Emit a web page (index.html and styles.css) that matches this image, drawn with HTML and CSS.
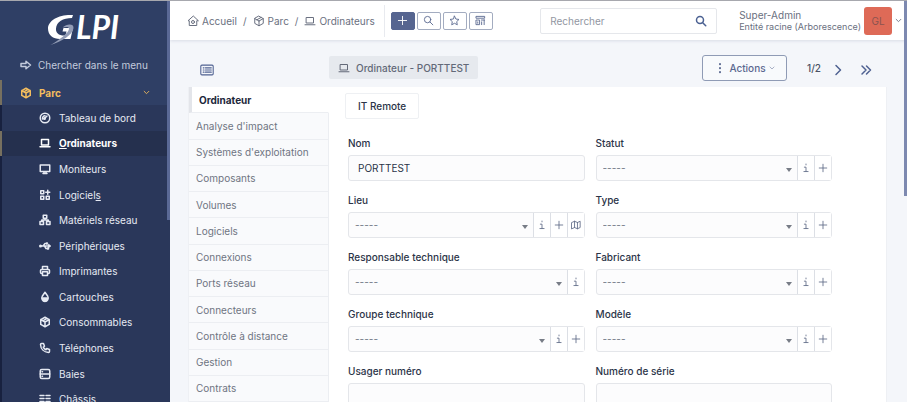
FILE: index.html
```html
<!DOCTYPE html>
<html lang="fr">
<head>
<meta charset="utf-8">
<title>Ordinateur - PORTTEST - GLPI</title>
<link rel="stylesheet" href="styles.css">
</head>
<body>
<svg class="sprite" aria-hidden="true">
  <symbol id="i-arrow" viewBox="0 0 24 24"><path d="M2 9h10V4.500l9 7.500l-9 7.500V15H2z"/></symbol>
  <symbol id="i-box" viewBox="0 0 24 24"><path d="M12 2.500l8.500 4.700v9.600L12 21.500l-8.500-4.700V7.200zM12 12l8.500-4.800M12 12v9.500M12 12L3.500 7.200M16.200 4.900L7.700 9.600"/></symbol>
  <symbol id="i-gauge" viewBox="0 0 24 24"><circle cx="12" cy="12" r="9.500"/><path d="M10.500 13.500L16 8M7 14c-.5-4 2-6.500 5-6.500"/><circle cx="11" cy="13" r="1.500"/></symbol>
  <symbol id="i-laptop" viewBox="0 0 24 24"><path d="M2 19.500h20M5 5h14v11H5z"/></symbol>
  <symbol id="i-monitor" viewBox="0 0 24 24"><path d="M2.500 4h19v13h-19zM8 21h8M10 17v4M14 17v4"/></symbol>
  <symbol id="i-apps" viewBox="0 0 24 24"><path d="M3.500 3.500h6v6h-6zM3.500 14.500h6v6h-6zM14.500 14.500h6v6h-6zM13.500 6.500h8M17.500 2.500v8"/></symbol>
  <symbol id="i-network" viewBox="0 0 24 24"><path d="M8.500 2.500h7v6h-7zM2 15h7v6H2zM15 15h7v6h-7zM12 8.500V12M5.500 15v-3h13v3"/></symbol>
  <symbol id="i-usb" viewBox="0 0 24 24"><path d="M4 12h15M8 12l4-5h3M11 12l3 5h3"/><circle cx="3" cy="12" r="1.500"/><circle cx="16" cy="7" r="1"/><path d="M17 16h2v2h-2zM19.500 9.500l3 2.500l-3 2.500z"/></symbol>
  <symbol id="i-printer" viewBox="0 0 24 24"><path d="M7 17H5a2 2 0 0 1-2-2v-4a2 2 0 0 1 2-2h14a2 2 0 0 1 2 2v4a2 2 0 0 1-2 2h-2M17 9V3H7v6M7 13.500h10V21H7z"/></symbol>
  <symbol id="i-drop" viewBox="0 0 24 24"><path d="M12 2.500l5.500 8c2.500 4.500-.5 10.500-5.500 10.500S4 15 6.500 10.500z"/><path fill="currentColor" d="M7 14h10c0 7-10 7-10 0z"/></symbol>
  <symbol id="i-phone" viewBox="0 0 24 24"><path d="M5 3h4l2 5.500l-2.500 1.700a11 11 0 0 0 5.300 5.300L15.500 13l5.500 2v4a2 2 0 0 1-2 2C10 20.500 3.500 14 3 5a2 2 0 0 1 2-2z"/></symbol>
  <symbol id="i-rack" viewBox="0 0 24 24"><rect x="2.500" y="3" width="19" height="18" rx="3"/><path d="M2.500 12h19M6 7.500h1M6 16.500h1"/></symbol>
  <symbol id="i-chassis" viewBox="0 0 24 24"><path d="M2 5h8M2 11h8M2 17h8M14 5h8M14 11h8M14 17h8"/></symbol>
  <symbol id="i-home" viewBox="0 0 24 24"><path d="M12 2.500L2 11.500h2.500V21h15v-9.500H22z"/><circle cx="12" cy="14" r="3"/></symbol>
  <symbol id="i-search" viewBox="0 0 24 24"><circle cx="10" cy="10" r="7"/><path d="M15 15l6.500 6.500"/></symbol>
  <symbol id="i-star" viewBox="0 0 24 24"><path d="M12 2.500l3 6.300l6.800.9l-5 4.800l1.300 6.900L12 18l-6.100 3.400l1.300-6.900l-5-4.800l6.800-.9z"/></symbol>
  <symbol id="i-template" viewBox="0 0 24 24"><path d="M3 3h18v4H3zM3 11h7v10H3zM6 15v3M14 11h7M14.500 15v6M20 11v10"/></symbol>
  <symbol id="i-plus" viewBox="0 0 24 24"><path d="M12 3v18M3 12h18"/></symbol>
  <symbol id="i-list" viewBox="0 0 26 22"><rect x="1.500" y="2" width="23" height="18" rx="2"/><path d="M6 7h1.500M6 11h1.500M6 15h1.500M10 7h11M10 11h11M10 15h11"/></symbol>
  <symbol id="i-down" viewBox="0 0 24 24"><path d="M4 8l8 8l8-8"/></symbol>
  <symbol id="i-next" viewBox="0 0 24 24"><path d="M8 3l9 9l-9 9"/></symbol>
  <symbol id="i-last" viewBox="0 0 24 24"><path d="M4 4l8 8l-8 8M13 4l8 8l-8 8"/></symbol>
  <symbol id="i-dots" viewBox="0 0 24 24"><path stroke-width="4" d="M12 4v.5M12 12v.5M12 20v.5"/></symbol>
  <symbol id="i-info" viewBox="0 0 24 24"><path d="M12 2.500v2M8 10h4v10M7 20.500h10"/></symbol>
  <symbol id="i-map" viewBox="0 0 24 24"><path d="M2 6l6.500-3l7 3L22 3v15l-6.500 3l-7-3L2 21zM8.500 3v15M15.500 6v15"/></symbol>
</svg>

<div class="app">
  <aside class="sidebar">
    <a class="logo" href="#" aria-label="GLPI">
      <svg viewBox="0 -10 84 44">
        <path d="M25 1C12 0 0 6 0 14.500c0 6.500 5 10.500 12 10.500h10.500L25 14h-9.500l-1 3.500h4l-1 4C11 22 7.500 19 8 14.500C8.500 8 15 4 24 4z" fill="#fff"/>
        <path d="M14.500 13.500C19 9.500 26 9.500 25.500 14C25 20.500 14 27.500 2.500 31C12 25.500 20.500 19 21 15c.3-2.500-3-2.500-6.500-1.500z" fill="#929cb5"/>
        <text x="28" y="25">LPI</text>
      </svg>
    </a>
    <a class="find" href="#"><svg class="icon"><use href="#i-arrow"/></svg>Chercher dans le menu</a>
    <a class="section" href="#"><svg class="icon"><use href="#i-box"/></svg><span>Parc</span><svg class="icon chev"><use href="#i-down"/></svg></a>
    <nav class="menu">
      <a href="#"><svg class="icon"><use href="#i-gauge"/></svg>Tableau de bord</a>
      <a class="active" href="#"><svg class="icon"><use href="#i-laptop"/></svg><span><u>O</u>rdinateurs</span></a>
      <a href="#"><svg class="icon"><use href="#i-monitor"/></svg>Moniteurs</a>
      <a href="#"><svg class="icon"><use href="#i-apps"/></svg><span>Logiciel<u>s</u></span></a>
      <a href="#"><svg class="icon"><use href="#i-network"/></svg>Matériels réseau</a>
      <a href="#"><svg class="icon"><use href="#i-usb"/></svg>Périphériques</a>
      <a href="#"><svg class="icon"><use href="#i-printer"/></svg>Imprimantes</a>
      <a href="#"><svg class="icon"><use href="#i-drop"/></svg>Cartouches</a>
      <a href="#"><svg class="icon"><use href="#i-box"/></svg>Consommables</a>
      <a href="#"><svg class="icon"><use href="#i-phone"/></svg>Téléphones</a>
      <a href="#"><svg class="icon"><use href="#i-rack"/></svg>Baies</a>
      <a href="#"><svg class="icon"><use href="#i-chassis"/></svg>Châssis</a>
    </nav>
  </aside>

  <div class="page">
    <header class="topbar">
      <nav class="crumbs">
        <a href="#"><svg class="icon"><use href="#i-home"/></svg>Accueil</a><span>/</span>
        <a href="#"><svg class="icon"><use href="#i-box"/></svg>Parc</a><span>/</span>
        <a href="#"><svg class="icon"><use href="#i-laptop"/></svg>Ordinateurs</a>
      </nav>
      <div class="tools">
        <button class="primary" aria-label="Ajouter"><svg class="icon"><use href="#i-plus"/></svg></button>
        <button aria-label="Rechercher"><svg class="icon"><use href="#i-search"/></svg></button>
        <button aria-label="Favoris"><svg class="icon"><use href="#i-star"/></svg></button>
        <button aria-label="Gabarits"><svg class="icon"><use href="#i-template"/></svg></button>
      </div>
      <form class="search">
        <input type="text" placeholder="Rechercher" aria-label="Rechercher">
        <button type="button" aria-label="Lancer la recherche"><svg class="icon"><use href="#i-search"/></svg></button>
      </form>
      <a class="user" href="#">
        <span class="who"><span class="role">Super-Admin</span><span>Entité racine (Arborescence)</span></span>
        <span class="avatar">GL</span>
        <svg class="icon chev"><use href="#i-down"/></svg>
      </a>
    </header>

    <main class="content">
      <div class="toolbar">
        <button class="plain list" aria-label="Liste"><svg class="icon"><use href="#i-list"/></svg></button>
        <h1 class="title"><svg class="icon"><use href="#i-laptop"/></svg>Ordinateur - PORTTEST</h1>
        <button class="actions"><svg class="icon"><use href="#i-dots"/></svg>Actions<svg class="icon chev"><use href="#i-down"/></svg></button>
        <span class="count">1/2</span>
        <button class="plain next" aria-label="Suivant"><svg class="icon"><use href="#i-next"/></svg></button>
        <button class="plain last" aria-label="Dernier"><svg class="icon"><use href="#i-last"/></svg></button>
      </div>
      <div class="panel">
        <nav class="tabs">
          <a class="current" href="#">Ordinateur</a>
          <a href="#">Analyse d'impact</a>
          <a href="#">Systèmes d'exploitation</a>
          <a href="#">Composants</a>
          <a href="#">Volumes</a>
          <a href="#">Logiciels</a>
          <a href="#">Connexions</a>
          <a href="#">Ports réseau</a>
          <a href="#">Connecteurs</a>
          <a href="#">Contrôle à distance</a>
          <a href="#">Gestion</a>
          <a href="#">Contrats</a>
        </nav>
        <form class="form">
          <button type="button" class="remote">IT Remote</button>
          <div class="fields">
            <div class="field"><label for="nom">Nom</label>
              <div class="group"><input id="nom" type="text" value="PORTTEST"></div></div>
            <div class="field"><label for="statut">Statut</label>
              <div class="group"><div class="pick"><select id="statut"><option>-----</option></select></div><button type="button" aria-label="Info"><svg class="icon"><use href="#i-info"/></svg></button><button type="button" aria-label="Ajouter"><svg class="icon"><use href="#i-plus"/></svg></button></div></div>
            <div class="field"><label for="lieu">Lieu</label>
              <div class="group"><div class="pick"><select id="lieu"><option>-----</option></select></div><button type="button" aria-label="Info"><svg class="icon"><use href="#i-info"/></svg></button><button type="button" aria-label="Ajouter"><svg class="icon"><use href="#i-plus"/></svg></button><button type="button" aria-label="Carte"><svg class="icon"><use href="#i-map"/></svg></button></div></div>
            <div class="field"><label for="type">Type</label>
              <div class="group"><div class="pick"><select id="type"><option>-----</option></select></div><button type="button" aria-label="Info"><svg class="icon"><use href="#i-info"/></svg></button><button type="button" aria-label="Ajouter"><svg class="icon"><use href="#i-plus"/></svg></button></div></div>
            <div class="field"><label for="resp">Responsable technique</label>
              <div class="group"><div class="pick"><select id="resp"><option>-----</option></select></div><button type="button" aria-label="Info"><svg class="icon"><use href="#i-info"/></svg></button></div></div>
            <div class="field"><label for="fab">Fabricant</label>
              <div class="group"><div class="pick"><select id="fab"><option>-----</option></select></div><button type="button" aria-label="Info"><svg class="icon"><use href="#i-info"/></svg></button><button type="button" aria-label="Ajouter"><svg class="icon"><use href="#i-plus"/></svg></button></div></div>
            <div class="field"><label for="groupe">Groupe technique</label>
              <div class="group"><div class="pick"><select id="groupe"><option>-----</option></select></div><button type="button" aria-label="Info"><svg class="icon"><use href="#i-info"/></svg></button><button type="button" aria-label="Ajouter"><svg class="icon"><use href="#i-plus"/></svg></button></div></div>
            <div class="field"><label for="modele">Modèle</label>
              <div class="group"><div class="pick"><select id="modele"><option>-----</option></select></div><button type="button" aria-label="Info"><svg class="icon"><use href="#i-info"/></svg></button><button type="button" aria-label="Ajouter"><svg class="icon"><use href="#i-plus"/></svg></button></div></div>
            <div class="field"><label for="usager">Usager numéro</label>
              <div class="group"><input id="usager" type="text"></div></div>
            <div class="field"><label for="serie">Numéro de série</label>
              <div class="group"><input id="serie" type="text"></div></div>
          </div>
        </form>
      </div>
    </main>
  </div>
</div>
</body>
</html>
```
FILE: styles.css
```css
* { box-sizing: border-box; }
body {
  margin: 0;
  font: 10px/16px Inter, "Liberation Sans", sans-serif;
  color: #2b3448;
  background: #f4f6fa;
}
a { color: inherit; text-decoration: none; }
button, input, select { font: inherit; color: inherit; margin: 0; }
button { display: inline-flex; align-items: center; justify-content: center; padding: 0; background: #fff; }
.sprite { position: absolute; width: 0; height: 0; }
.icon {
  width: 12px;
  height: 12px;
  flex: none;
  fill: none;
  stroke: currentColor;
  stroke-width: 2;
  stroke-linejoin: round;
  stroke-linecap: round;
}
.icon.chev { width: 7px; height: 7px; stroke-width: 3; }

.app {
  position: relative;
  display: flex;
  height: 100vh;
  overflow: hidden;
  border-top: 1px solid #a7a8ae;
}
.app::after {
  content: "";
  position: absolute;
  top: 0;
  right: 0;
  width: 3px;
  height: 195px;
  background: #7d89b0;
}

/* Sidebar */
.sidebar {
  position: relative;
  flex: 0 0 170px;
  display: flex;
  flex-direction: column;
  overflow: hidden;
  color: #e6eaf3;
  background: #2f3f65;
}
.sidebar::after {
  content: "";
  position: absolute;
  top: 0;
  right: 0;
  width: 3px;
  height: 219px;
  background: #5a6996;
}
.sidebar .icon { stroke-width: 3; }
.logo { flex: none; height: 51px; padding: 3px 0 0 48px; }
.logo svg { display: block; width: 84px; height: 44px; }
.logo text { font: italic 700 32px Lato, sans-serif; fill: #fff; }
.find, .section { flex: none; display: flex; align-items: center; gap: 6px; padding-left: 20px; }
.find { height: 25px; margin-bottom: 3px; color: #c3cbdd; }
.section { height: 25px; padding-left: 18px; padding-right: 20px; gap: 7px; border-left: 2px solid #77705f; color: #f3bd5e; font-weight: 700; }
.section span { flex: 1; }
.menu {
  flex: none;
  height: 307px;
  display: grid;
  grid-template-rows: repeat(12, 1fr);
  background: #2a375a;
}
.menu a { display: flex; align-items: center; gap: 8px; padding-left: 37px; border-left: 2px solid #18213f; }
.menu .active { background: #25304e; border-left-color: #77705f; color: #fff; font-weight: 700; }

/* Top bar */
.page { flex: 1; min-width: 0; display: flex; flex-direction: column; }
.topbar {
  flex: 0 0 39px;
  display: flex;
  align-items: center;
  padding-right: 5px;
  background: #fff;
  box-shadow: 0 1px 3px #d8dce6;
  color: #6a7080;
}
.crumbs { display: flex; align-items: center; gap: 6px; padding-left: 17px; }
.crumbs a { display: flex; align-items: center; gap: 3px; }
.tools { display: flex; gap: 2px; margin-left: 9px; padding: 7px 0 7px 6px; border-left: 1px solid #e8eaef; }
.tools button { width: 24px; height: 18px; border: 1px solid #a3acc0; border-radius: 2px; color: #5c6a91; }
.tools .primary { background: #566590; border-color: #566590; color: #fff; }
.tools .icon { width: 11px; height: 11px; }
.search { flex: 0 1 177px; min-width: 0; display: flex; height: 26px; margin-left: auto; border: 1px solid #e5e7eb; border-radius: 2px; }
.search input { flex: 1; min-width: 0; border: 0; padding: 0 9px; background: none; }
.search input::placeholder { color: #9297a2; }
.search button { width: 30px; border: 0; color: #4b6192; background: none; }
.search .icon { stroke-width: 3; }
.user { display: flex; align-items: center; gap: 3px; margin-left: 22px; }
.who { display: flex; flex-direction: column; font-size: 9px; line-height: 12px; white-space: nowrap; }
.role { font-size: 10px; }
.avatar { width: 28px; height: 28px; border-radius: 3px; background: #de6a57; color: #8b5350; text-align: center; line-height: 28px; }

/* Record toolbar */
.content { flex: 1; min-height: 0; display: flex; flex-direction: column; padding: 0 20px 0 18px; }
.toolbar { flex: 0 0 47px; display: flex; align-items: center; padding: 8px 15px 0 12px; color: #5a6890; }
.plain { padding-top: 4px; border: 0; background: none; color: #4f6191; }
.plain .icon { stroke-width: 3; }
.list .icon { width: 14px; height: 12px; stroke-width: 2; }
.title { display: flex; align-items: center; gap: 6px; height: 23px; margin: 0 0 0 115px; padding: 0 9px; border-radius: 2px; background: #e6e9ee; color: #636978; font-size: 10px; font-weight: 500; }
.actions { width: 85px; height: 26px; margin-left: auto; border: 1px solid #8f9bb5; border-radius: 3px; background: #f8fafc; font-weight: 500; gap: 3px; }
.actions .chev { width: 6px; height: 6px; stroke-width: 2; }
.count { margin-left: 20px; color: #4a5163; font-weight: 500; }
.next { margin-left: 11px; }
.last { margin-left: 16px; }

/* Record */
.panel { flex: 1; min-height: 0; display: flex; background: #fff; border: 1px solid #eef0f4; border-width: 0 1px; }
.tabs { flex: 0 0 140px; display: grid; grid-template-rows: repeat(12, 1fr); background: #f9fafc; color: #6f7582; }
.tabs a { display: flex; align-items: center; padding-left: 7px; border-right: 1px solid #eceef2; border-bottom: 1px solid #eceef2; }
.tabs .current { border-left: 3px solid #e3e5ea; border-right-color: #fff; background: #fff; color: #1d273b; font-weight: 700; }
.form { flex: 1; min-width: 0; padding: 6px 54px 0 19px; overflow: hidden; }
.remote { height: 26px; margin-left: -3px; padding: 0 12px; border: 1px solid #eef0f3; border-radius: 2px; font-weight: 500; }
.fields { display: grid; grid-template-columns: 1fr 1fr; gap: 11px; margin-top: 16px; }
.field { min-width: 0; }
.field label { display: block; margin-bottom: 4px; font-weight: 500; }
.group { display: flex; height: 26px; border: 1px solid #e4e6ea; border-radius: 3px; background: #fcfcfd; }
.group input { flex: 1; min-width: 0; padding: 0 9px; border: 0; background: none; }
.pick { position: relative; flex: 1; display: flex; }
.pick select { flex: 1; appearance: none; padding: 0 6px; border: 0; background: none; color: #6f7582; }
.pick::after {
  content: "";
  position: absolute;
  right: 5px;
  top: 12px;
  border: 3px solid transparent;
  border-top: 4px solid #777c86;
  border-bottom: 0;
}
.group button { width: 17px; border: 0; border-left: 1px solid #dcdfe5; background: #fff; color: #5b6784; }
.group .icon { width: 10px; height: 10px; }
```
